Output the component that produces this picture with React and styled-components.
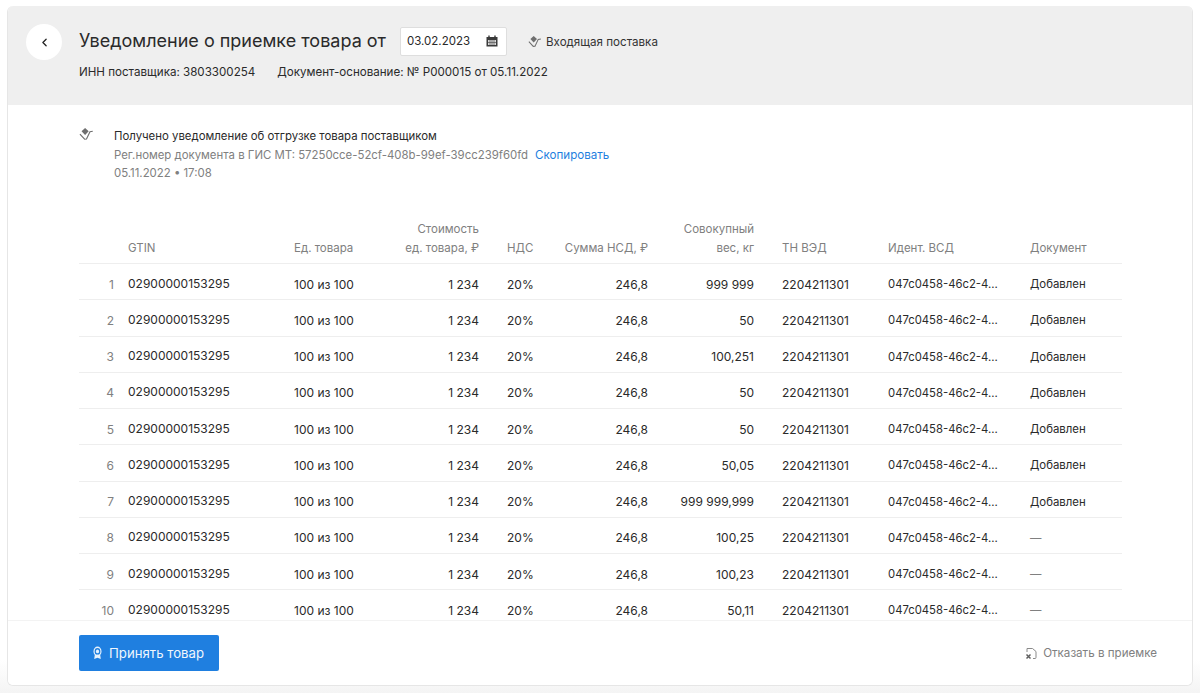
import React from "react";
import styled, { createGlobalStyle } from "styled-components";
import { ChevronLeft } from "lucide-react";

const GlobalStyle = createGlobalStyle`
  html, body {
    margin: 0;
    height: 100%;
    background: #f7f7f7;
    font-family: Inter, "Noto Sans", sans-serif;
    color: #222;
  }
  * { box-sizing: border-box; }
`;

const weights = ["999 999", "50", "100,251", "50", "50", "50,05", "999 999,999", "100,25", "100,23", "50,11"];

const CheckIcon = ({ size = 16, color = "#6f6f6f" }) => (
  <svg width={size} height={size} viewBox="0 0 16 16" fill="none">
    <path d="M6.500 1l3.800 3.600-3.800 3.900-3.800-3.900z" fill={color} />
    <path d="M1 7.500l5 5.500 2-.2 3.700-7.800 3-.5" stroke={color} strokeWidth="1.200" />
  </svg>
);

const CalendarIcon = () => (
  <svg width="12" height="12" viewBox="0 0 12 12" fill="none">
    <path d="M0.500 2h11v9.500h-11z" fill="#3a3a3a" />
    <path d="M3 0.500v2M9 0.500v2" stroke="#3a3a3a" strokeWidth="1.400" />
    <path d="M2 5h8v5H2z" fill="#d8d8d8" />
    <path d="M4 5v5M6 5v5M8 5v5M2 7.500h8" stroke="#555" strokeWidth=".7" />
  </svg>
);

const App = () => (
  <Page>
    <GlobalStyle />
    <Card>
      <Header>
        <BackButton><ChevronLeft size={13} strokeWidth={2.4} color="#222" /></BackButton>
        <HeaderText>
          <TitleRow>
            <Title>Уведомление о приемке товара от</Title>
            <DateField>
              03.02.2023
              <CalendarIcon />
            </DateField>
            <Direction><CheckIcon size={14} />Входящая поставка</Direction>
          </TitleRow>
          <MetaRow>
            <span>ИНН поставщика: 3803300254</span>
            <span>Документ-основание: № Р000015 от 05.11.2022</span>
          </MetaRow>
        </HeaderText>
      </Header>
      <Content>
        <Notice>
          <CheckIcon size={15} />
          <NoticeText>
            <NoticeTitle>Получено уведомление об отгрузке товара поставщиком</NoticeTitle>
            <NoticeMuted>
              Рег.номер документа в ГИС МТ: 57250cce-52cf-408b-99ef-39cc239f60fd
              <CopyLink>Скопировать</CopyLink>
            </NoticeMuted>
            <NoticeMuted>05.11.2022 • 17:08</NoticeMuted>
          </NoticeText>
        </Notice>
        <Table>
          <colgroup>
            <col style={{ width: 35 }} />
            <col style={{ width: 166 }} />
            <col style={{ width: 90 }} />
            <col style={{ width: 109 }} />
            <col style={{ width: 44 }} />
            <col style={{ width: 125 }} />
            <col style={{ width: 106 }} />
            <col style={{ width: 120 }} />
            <col style={{ width: 142 }} />
            <col style={{ width: 106 }} />
          </colgroup>
          <thead>
            <tr>
              <Th />
              <Th $pad>GTIN</Th>
              <Th $pad>Ед. товара</Th>
              <Th $right>Стоимость<br />ед. товара, ₽</Th>
              <Th $pad $wide>НДС</Th>
              <Th $right>Сумма НСД, ₽</Th>
              <Th $right>Совокупный<br />вес, кг</Th>
              <Th $pad $wide>ТН ВЭД</Th>
              <Th $pad>Идент. ВСД</Th>
              <Th $pad>Документ</Th>
            </tr>
          </thead>
          <tbody>
            {weights.map((w, i) => (
              <tr key={i}>
                <Num>{i + 1}</Num>
                <Gtin>02900000153295</Gtin>
                <Td $pad>100 из 100</Td>
                <Td $right>1 234</Td>
                <Td $pad $wide>20%</Td>
                <Td $right>246,8</Td>
                <Td $right>{w}</Td>
                <Td $pad $wide>2204211301</Td>
                <Ident>047c0458-46c2-4...</Ident>
                <DocCell $muted={i > 6}>{i > 6 ? "—" : "Добавлен"}</DocCell>
              </tr>
            ))}
          </tbody>
        </Table>
      </Content>
      <Footer>
        <PrimaryButton>
          <svg width="11" height="14" viewBox="0 0 14 15" fill="none" preserveAspectRatio="none">
            <path d="M3.600 9.500l-.8 4.500L7 12.500l4.200 1.500-.8-4.500" fill="#e8f2fc" />
            <circle cx="7" cy="5.800" r="4.400" stroke="#e8f2fc" strokeWidth="1.500" />
            <circle cx="7" cy="5.800" r="2" fill="#e8f2fc" />
          </svg>
          Принять товар
        </PrimaryButton>
        <RejectLink>
          <svg width="12" height="13" viewBox="0 0 12 13" fill="none">
            <path d="M2 5V1.500h5.500l3.500 3v6a1 1 0 0 1-1 1H8" stroke="#8a8a8a" strokeWidth="1" />
            <path d="M1.500 7.500l4 4M5.500 7.500l-4 4" stroke="#5f5f5f" strokeWidth="1.500" />
          </svg>
          Отказать в приемке
        </RejectLink>
      </Footer>
    </Card>
  </Page>
);

const Page = styled.div`
  height: 100vh;
  padding: 6px 7px 7px;
  overflow: hidden;
  background: linear-gradient(#ffffff 0, #ffffff 660px, #f4f4f4 693px);
`;
const Card = styled.div`
  height: 680px;
  display: flex;
  flex-direction: column;
  background: #fff;
  border: 1px solid #e6e6e6;
  border-top: none;
  border-radius: 6px;
  overflow: hidden;
`;
const Header = styled.div`
  height: 99px;
  flex: none;
  display: flex;
  align-items: flex-start;
  gap: 17px;
  padding: 18px 18px 0;
  background: #efefef;
`;
const BackButton = styled.div`
  width: 36px;
  height: 36px;
  flex: none;
  display: flex;
  align-items: center;
  justify-content: center;
  border-radius: 50%;
  background: #fff;
`;
const HeaderText = styled.div`
  display: flex;
  flex-direction: column;
  gap: 10px;
  padding-top: 3px;
`;
const TitleRow = styled.div`
  display: flex;
  align-items: center;
  height: 28px;
`;
const Title = styled.div`
  padding-bottom: 2px;
  font-size: 18px;
  color: #2a2a2a;
`;
const DateField = styled.div`
  width: 107px;
  height: 29px;
  margin-left: 14px;
  padding: 0 8px 0 6px;
  display: flex;
  align-items: center;
  justify-content: space-between;
  font-size: 11.500px;
  color: #2a2a2a;
  background: #fff;
  border: 1px solid #dedede;
  border-radius: 2px;
`;
const Direction = styled.div`
  margin-left: 21px;
  padding-top: 2px;
  display: flex;
  align-items: center;
  gap: 4px;
  font-size: 11.600px;
  color: #333;
`;
const MetaRow = styled.div`
  display: flex;
  gap: 22px;
  font-size: 11.600px;
  color: #2a2a2a;
`;
const Content = styled.div`
  flex: 1;
  min-height: 0;
  overflow: hidden;
  padding: 22px 70px 0 71px;
`;
const Notice = styled.div`
  display: flex;
  gap: 20px;
`;
const NoticeText = styled.div`
  display: flex;
  flex-direction: column;
  font-size: 11.400px;
  line-height: 18.500px;
`;
const NoticeTitle = styled.div`
  color: #2a2a2a;
`;
const NoticeMuted = styled.div`
  color: #808080;
`;
const CopyLink = styled.span`
  margin-left: 7px;
  font-size: 11.600px;
  color: #1f7fe0;
`;
const Table = styled.table`
  width: 1043px;
  margin-top: 31px;
  border-collapse: collapse;
  table-layout: fixed;
  font-size: 12px;
`;
const Th = styled.th`
  height: 50px;
  padding: 0 0 6px ${(p) => (p.$pad ? (p.$wide ? "28px" : "14px") : "0")};
  vertical-align: bottom;
  font-size: 11.500px;
  font-weight: 400;
  line-height: 18.500px;
  text-align: ${(p) => (p.$right ? "right" : "left")};
  color: #808080;
  border-bottom: 1px solid #eeeeee;
  white-space: nowrap;
`;
const Td = styled.td`
  height: 36.250px;
  padding: 5px 0 0 ${(p) => (p.$pad ? (p.$wide ? "28px" : "14px") : "0")};
  text-align: ${(p) => (p.$right ? "right" : "left")};
  color: ${(p) => (p.$muted ? "#808080" : "#2a2a2a")};
  border-bottom: 1px solid #eeeeee;
  white-space: nowrap;
`;
const Num = styled(Td)`
  text-align: right;
  color: #808080;
`;
const Gtin = styled(Td)`
  padding: 3px 0 0 14px;
`;
const Ident = styled(Td)`
  padding-left: 14px;
  font-size: 11.300px;
`;
const DocCell = styled(Td)`
  padding-left: 14px;
  font-size: 11.400px;
`;
const Footer = styled.div`
  height: 65px;
  flex: none;
  display: flex;
  align-items: center;
  justify-content: space-between;
  padding: 0 35px 0 71px;
  background: #fff;
  border-top: 1px solid #f3f3f3;
`;
const PrimaryButton = styled.button`
  width: 140px;
  height: 36px;
  padding: 0 0 0 13px;
  display: flex;
  align-items: center;
  gap: 6px;
  font-family: inherit;
  font-size: 13.200px;
  color: #f0f6fd;
  background: #1f7fe0;
  border: none;
  border-radius: 2px;
`;
const RejectLink = styled.div`
  display: flex;
  align-items: center;
  gap: 6px;
  font-size: 11.600px;
  color: #808080;
`;

export default App;
